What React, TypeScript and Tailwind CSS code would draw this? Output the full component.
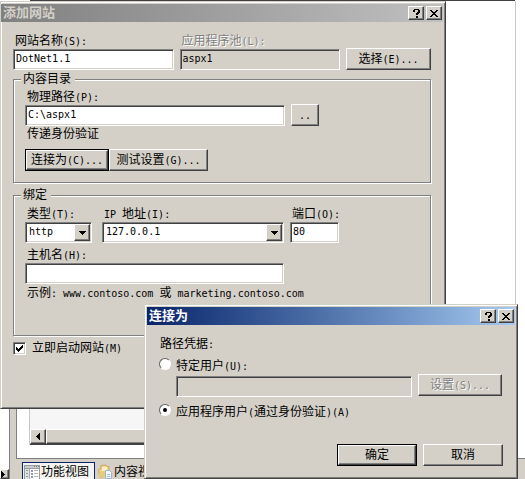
import React, { useState } from 'react'
import clsx from 'clsx'

const raised =
  'border border-t-white border-l-white border-r-[#404040] border-b-[#404040] shadow-[inset_-1px_-1px_0_#808080]'
const sunken =
  'border border-t-[#808080] border-l-[#808080] border-r-white border-b-white shadow-[inset_1px_1px_0_#404040,inset_-1px_-1px_0_#d4d0c8]'
const frame =
  'bg-[#d4d0c8] border border-t-[#d4d0c8] border-l-[#d4d0c8] border-r-[#404040] border-b-[#404040] shadow-[inset_1px_1px_0_#fff,inset_-1px_-1px_0_#808080]'

// Latin runs are half the width of a Chinese character
function Text({ children }: { children: string }) {
  const parts = children.split(/([\x20-\x7e]+)/).filter(Boolean)
  return (
    <>
      {parts.map((part, i) => (
        <span key={i} className={clsx('whitespace-pre', /^[\x20-\x7e]/.test(part) && 'text-[10px] leading-none')}>
          {part}
        </span>
      ))}
    </>
  )
}

interface ButtonProps {
  label: string
  className?: string
  isDefault?: boolean
  disabled?: boolean
}

function Button({ label, className, isDefault, disabled }: ButtonProps) {
  return (
    <button
      type="button"
      disabled={disabled}
      className={clsx(
        'flex shrink-0 items-stretch bg-[#d4d0c8] leading-4',
        isDefault && 'border border-black',
        disabled && 'text-[#808080] [text-shadow:1px_1px_0_#fff]',
        className
      )}
    >
      <span className={clsx('flex flex-1 items-center justify-center', raised)}>
        <span>
          <Text>{label}</Text>
        </span>
      </span>
    </button>
  )
}

interface FieldProps {
  id: string
  label: string
  value?: string
  className?: string
  disabled?: boolean
}

function Field({ id, label, value = '', className, disabled }: FieldProps) {
  return (
    <div className={clsx('flex flex-col', className)}>
      <label
        htmlFor={id}
        className={clsx('pl-0.5 leading-4 whitespace-nowrap', disabled && 'text-[#808080] [text-shadow:1px_1px_0_#fff]')}
      >
        <Text>{label}</Text>
      </label>
      <input
        id={id}
        defaultValue={value}
        readOnly={disabled}
        className={clsx('h-[21px] w-full px-[2px] pb-[2px] text-[10px] outline-none', sunken, disabled ? 'bg-[#d4d0c8]' : 'bg-white')}
      />
    </div>
  )
}

function SelectField({ id, label, value, className }: FieldProps) {
  return (
    <div className={clsx('flex flex-col', className)}>
      <label htmlFor={id} className="pl-0.5 leading-4 whitespace-nowrap">
        <Text>{label}</Text>
      </label>
      <div className="relative">
        <select id={id} className={clsx('block h-[21px] w-full appearance-none bg-white pb-[2px] pl-[3px] text-[10px] outline-none', sunken)}>
          <option>{value}</option>
        </select>
        <span className={clsx('pointer-events-none absolute inset-y-[2px] right-[2px] flex w-4 items-center justify-center bg-[#d4d0c8]', raised)}>
          <svg width="7" height="4" viewBox="0 0 7 4" shapeRendering="crispEdges">
            <path d="M0 0h7v1H6v1H5v1H4v1H3V3H2V2H1V1H0z" />
          </svg>
        </span>
      </div>
    </div>
  )
}

function TitleBar({ title, active }: { title: string; active?: boolean }) {
  return (
    <div
      className={clsx(
        'flex h-[18px] items-center gap-[2px] bg-linear-to-r pr-px pl-[2px]',
        active ? 'from-[#0a246a] to-[#a6caf0] text-white' : 'from-[#808080] to-[#c0c0c0] text-[#d4d0c8]'
      )}
    >
      <h2 className="flex-1 text-[13px] leading-[18px] font-bold">{title}</h2>
      <button type="button" aria-label="帮助" className={clsx('flex h-[14px] w-4 items-center justify-center bg-[#d4d0c8]', raised)}>
        <svg width="7" height="9" viewBox="0 0 7 9" shapeRendering="crispEdges">
          <path d="M1 0h5v1h1v3H6v1H5v1H3V4h1V3h1V1H2v2H0V1h1zM3 7h2v2H3z" />
        </svg>
      </button>
      <button type="button" aria-label="关闭" className={clsx('flex h-[14px] w-4 items-center justify-center bg-[#d4d0c8]', raised)}>
        <svg width="8" height="7" viewBox="0 0 8 7" shapeRendering="crispEdges">
          <path d="M0 0h2v1h1v1h2V1h1V0h2v1H7v1H6v1H5v1h1v1h1v1h1v1H6V6H5V5H3v1H2v1H0V6h1V5h1V4h1V3H2V2H1V1H0z" />
        </svg>
      </button>
    </div>
  )
}

function Group({ title, className, children }: { title: string; className?: string; children: React.ReactNode }) {
  return (
    <fieldset
      className={clsx('min-w-0 border border-[#808080] pl-[11px] shadow-[1px_1px_0_#fff,inset_1px_1px_0_#fff]', className)}
    >
      <legend className="-ml-1 bg-[#d4d0c8] pr-1 pl-[2px] leading-3">{title}</legend>
      {children}
    </fieldset>
  )
}

function AddSiteDialog() {
  return (
    <section className={clsx('absolute top-px left-0 w-[446px] max-w-full pt-[2px] pr-[2px] pb-[52px]', frame)}>
      <TitleBar title="添加网站" />
      <div className="flex flex-col pt-[11px] pr-3 pl-3">
        <div className="flex items-end gap-[6px]">
          <Field id="site" label="网站名称(S):" value="DotNet1.1" className="flex-1" />
          <Field id="pool" label="应用程序池(L):" value="aspx1" className="flex-1" disabled />
          <Button label="选择(E)..." className="h-[22px] w-[85px]" />
        </div>

        <Group title="内容目录" className="mt-[3px] pb-[11px]">
          <div className="flex items-end gap-[6px] pt-1">
            <Field id="path" label="物理路径(P):" value="C:\aspx1" className="w-[260px]" />
            <Button label=".." className="h-[22px] w-7" />
          </div>
          <p className="pl-0.5 leading-4">传递身份验证</p>
          <div className="flex pt-[7px]">
            <Button label="连接为(C)..." className="h-[22px] w-[84px]" isDefault />
            <Button label="测试设置(G)..." className="h-[22px] w-[99px]" />
          </div>
        </Group>

        <Group title="绑定" className="mt-[6px] pb-[34px]">
          <div className="flex items-end pt-[5px]">
            <SelectField id="type" label="类型(T):" value="http" className="mr-[10px] w-[67px]" />
            <SelectField id="ip" label="IP 地址(I):" value="127.0.0.1" className="mr-[6px] w-[182px]" />
            <Field id="port" label="端口(O):" value="80" className="w-[49px]" />
          </div>
          <Field id="host" label="主机名(H):" className="w-[259px] pt-1" />
          <p className="pt-px pl-0.5 leading-4">
            <Text>示例: www.contoso.com 或 marketing.contoso.com</Text>
          </p>
        </Group>

        <label className="flex items-center gap-[6px] pt-1 leading-4">
          <span className="relative flex">
            <input type="checkbox" defaultChecked className={clsx('peer size-[13px] appearance-none bg-white', sunken)} />
            <svg
              className="pointer-events-none absolute top-[3px] left-[3px] hidden peer-checked:block"
              width="7"
              height="7"
              viewBox="0 0 7 7"
              shapeRendering="crispEdges"
            >
              <path d="M0 2h1v1h1v1h1V3h1V2h1V1h1V0h1v3H6v1H5v1H4v1H3v1H2V6H1V5H0z" />
            </svg>
          </span>
          <span>
            <Text>立即启动网站(M)</Text>
          </span>
        </label>
      </div>
    </section>
  )
}

const radioClass =
  'flex size-3 shrink-0 appearance-none items-center justify-center rounded-full border border-t-[#606060] border-l-[#606060] border-r-white border-b-white bg-white checked:before:size-1 checked:before:rounded-full checked:before:bg-black'

function ConnectAsDialog() {
  const [mode, setMode] = useState('app')
  return (
    <section className={clsx('absolute top-[304px] left-[144px] w-[374px] px-[2px] pt-[2px] pb-3', frame)}>
      <TitleBar title="连接为" active />
      <div className="flex flex-col pt-[11px] pr-3 pl-3">
        <p className="pl-px leading-4">
          <Text>路径凭据:</Text>
        </p>
        <label className="flex items-start gap-[5px] pt-[6px] leading-4">
          <input type="radio" name="mode" checked={mode === 'user'} onChange={() => setMode('user')} className={radioClass} />
          <span>
            <Text>特定用户(U):</Text>
          </span>
        </label>
        <div className="flex items-start gap-[6px] pr-px pl-[17px]">
          <input
            aria-label="特定用户"
            readOnly
            className={clsx('mt-[2px] h-[21px] min-w-0 flex-1 bg-[#d4d0c8] px-[2px] text-[10px] outline-none', sunken)}
          />
          <Button label="设置(S)..." className="h-[22px] w-[84px]" disabled />
        </div>
        <label className="flex items-start gap-[5px] pt-[7px] leading-4">
          <input type="radio" name="mode" checked={mode === 'app'} onChange={() => setMode('app')} className={radioClass} />
          <span>
            <Text>应用程序用户(通过身份验证)(A)</Text>
          </span>
        </label>
        <div className="flex justify-end gap-[6px] pt-6">
          <Button label="确定" className="h-[22px] w-20" isDefault />
          <Button label="取消" className="h-[22px] w-20" />
        </div>
      </div>
    </section>
  )
}

function FeaturesIcon() {
  return (
    <svg width="16" height="15" viewBox="0 0 16 15" shapeRendering="crispEdges">
      <path fill="#9a9a9a" d="M0 0h16v15H0z" />
      <path fill="#fff" d="M1 4h14v10H1z" />
      <path fill="#c4ccd4" d="M1 1h14v2H1z" />
      <path fill="#708090" d="M10 1h1v1h-1zM12 1h1v1h-1zM14 1h1v1h-1z" />
      <path fill="#dde2e6" d="M1 4h4v10H1z" />
      <path fill="#a8a8a8" d="M5 4h1v10H5z" />
      <path fill="#8c98a4" d="M2 5h2v1H2zM2 8h2v1H2zM2 11h2v1H2zM7 5h2v2H7zM7 8h2v2H7zM7 11h2v2H7z" />
      <path fill="#b4b4b4" d="M10 5h4v1h-4zM10 8h4v1h-4zM10 11h4v1h-4z" />
    </svg>
  )
}

function ContentIcon() {
  return (
    <svg width="16" height="16" viewBox="0 0 16 16">
      <path fill="#f0d890" stroke="#c8a858" d="M1.5 5.5 4 4.500V1.500l5-.500 1 1.500h2v9l-9 2z" />
      <path fill="#fbf0c4" d="M5 3h5v7l-5 1z" />
      <path fill="#e8cc78" d="M1 13.500 3.500 7H9v6.500z" />
      <path fill="#f4f8fc" stroke="#9cb4d0" d="M8.500 6.500h4l2 2v6h-6z" />
      <path stroke="#a4bcd8" d="M10 10.500h3M10 12.500h3" />
    </svg>
  )
}

function Workspace() {
  return (
    <main className="flex h-full flex-col">
      <div className="mr-[10px] ml-[30px] h-px shrink-0 bg-[#404040]" />
      <div className="flex min-h-0 flex-1">
        <div className="flex w-[10px] shrink-0 flex-col justify-end border-r border-[#808080] bg-white">
          <button type="button" aria-label="向右滚动" className={clsx('flex h-[10px] items-center justify-start bg-[#d4d0c8]', raised)}>
            <svg width="4" height="7" viewBox="0 0 4 7" shapeRendering="crispEdges">
              <path d="M0 0h1v1h1v1h1v1h1v1H3v1H2v1H1v1H0z" />
            </svg>
          </button>
        </div>
        <div className="w-[6px] shrink-0 bg-[#d4d0c8]" />
        <div className="flex min-w-0 flex-1 flex-col">
          <div className="flex min-h-0 flex-1 flex-col border-b border-l border-[#808080] bg-white pb-[13px] pl-3">
            <div className="mr-[9px] flex flex-1 flex-col border-r border-l border-[#c8c8c8] bg-white">
              <div className="w-1/2 flex-1 bg-[#f6f6f6]" />
              <div className="flex h-4 w-1/2 border-b border-[#404040] bg-[#d4d0c8]">
                <button type="button" aria-label="向左滚动" className={clsx('flex w-4 items-center justify-center', raised)}>
                  <svg width="4" height="7" viewBox="0 0 4 7" shapeRendering="crispEdges">
                    <path d="M4 0H3v1H2v1H1v1H0v1h1v1h1v1h1v1h1z" />
                  </svg>
                </button>
                <div className={clsx('flex-1', raised)} />
              </div>
            </div>
          </div>
          <nav className="flex h-5 shrink-0 items-start gap-[2px] overflow-hidden bg-[#d4d0c8] pt-[3px] pl-[6px]">
            <button type="button" className="flex h-5 w-[73px] shrink-0 items-center gap-px border border-[#0a246a] bg-[#f4f3f0] pl-px leading-4">
              <FeaturesIcon />
              功能视图
            </button>
            <button type="button" className="flex h-5 shrink-0 items-center gap-px leading-4">
              <ContentIcon />
              内容视图
            </button>
          </nav>
        </div>
      </div>
    </main>
  )
}

export default function App() {
  return (
    <div className="relative h-screen overflow-hidden bg-white font-['DejaVu_Sans_Mono','Noto_Sans_CJK_SC',monospace] text-[12px] text-black">
      <Workspace />
      <AddSiteDialog />
      <ConnectAsDialog />
    </div>
  )
}
